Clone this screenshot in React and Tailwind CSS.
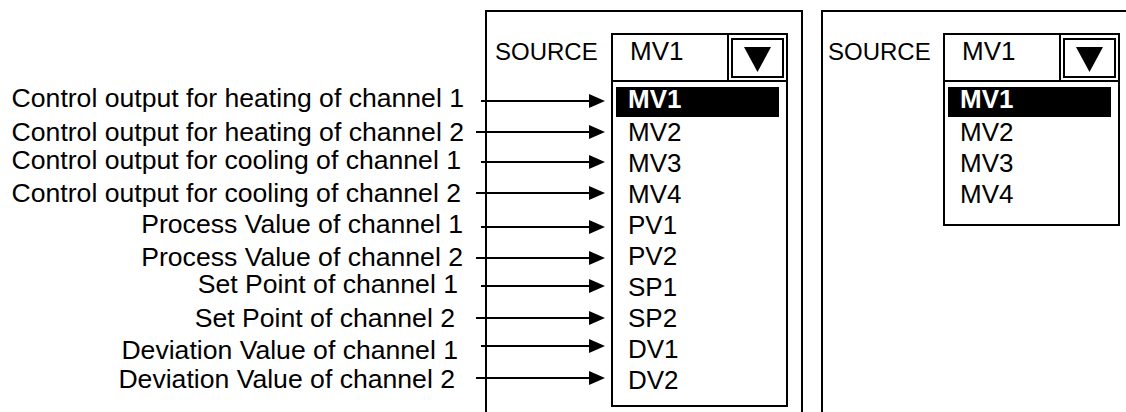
const labels = [
  { text: 'Control output for heating of channel 1', cls: 'mt-[75px] pr-[0px]' },
  { text: 'Control output for heating of channel 2', cls: 'mt-[7px] pr-[0px]' },
  { text: 'Control output for cooling of channel 1', cls: 'mt-[1px] pr-[3px]' },
  { text: 'Control output for cooling of channel 2', cls: 'mt-[6px] pr-[3px]' },
  { text: 'Process Value of channel 1', cls: 'mt-[4px] pr-[1px]' },
  { text: 'Process Value of channel 2', cls: 'mt-[6px] pr-[1px]' },
  { text: 'Set Point of channel 1', cls: 'mt-[0px] pr-[6px]' },
  { text: 'Set Point of channel 2', cls: 'mt-[7px] pr-[9px]' },
  { text: 'Deviation Value of channel 1', cls: 'mt-[5px] pr-[6px]' },
  { text: 'Deviation Value of channel 2', cls: 'mt-[2px] pr-[9px]' },
]

// arrow rows: top gap + where the shaft starts (odd rows start a bit later)
const arrows = [
  { cls: 'mt-[30px]', from: 5 },
  { cls: 'mt-[17px]', from: 0 },
  { cls: 'mt-[16px]', from: 5 },
  { cls: 'mt-[17px]', from: 0 },
  { cls: 'mt-[20px]', from: 5 },
  { cls: 'mt-[17px]', from: 0 },
  { cls: 'mt-[14px]', from: 5 },
  { cls: 'mt-[18px]', from: 0 },
  { cls: 'mt-[14px]', from: 5 },
  { cls: 'mt-[18px]', from: 0 },
]

const allItems = ['MV1', 'MV2', 'MV3', 'MV4', 'PV1', 'PV2', 'SP1', 'SP2', 'DV1', 'DV2']

function Arrow({ from }) {
  return (
    <svg width="129" height="14" viewBox="0 0 129 14" className="block shrink-0">
      <line x1={from} y1="7" x2="114" y2="7" stroke="black" strokeWidth="2" />
      <polygon points="113,0 129,7 113,14" fill="black" />
    </svg>
  )
}

function Dropdown({ items, listClass }) {
  return (
    <div className="mt-[21px] w-[177px] shrink-0 border-2 border-black">
      {/* Header */}
      <div className="flex h-[47px] border-b-2 border-black">
        <div className="flex-1 pl-[17px] pt-[4px] text-[26px] leading-[24px]">MV1</div>
        <div className="w-[59px] border-l-2 border-black px-[2px] pt-[3px]">
          <div className="flex h-[40px] justify-center border-2 border-black pt-[7px]">
            <svg width="27" height="25" viewBox="0 0 27 25" className="block">
              <polygon points="0,0 27,0 13.5,25" fill="black" />
            </svg>
          </div>
        </div>
      </div>

      {/* List */}
      <div className={`pl-[3px] pr-[7px] pt-[5px] ${listClass}`}>
        {items.map((it, i) =>
          i === 0 ? (
            <div key={it} className="mb-[3px] h-[30px] bg-black pl-[12px] text-[26px] font-bold leading-[24px] text-white">
              {it}
            </div>
          ) : (
            <div key={it} className="h-[31px] pl-[12px] text-[26px] leading-[24px]">
              {it}
            </div>
          )
        )}
      </div>
    </div>
  )
}

export default function App() {
  return (
    <div className="flex h-[412px] w-[1126px] items-start overflow-hidden bg-white pt-[10px] font-['Liberation_Sans',Arial,sans-serif] text-black">
      {/* Labels */}
      <div className="flex w-[464px] shrink-0 flex-col">
        {labels.map((l) => (
          <div key={l.text} className={`whitespace-nowrap text-right text-[26.6px] leading-[27px] ${l.cls}`}>
            {l.text}
          </div>
        ))}
      </div>

      {/* Panel 1 */}
      <div className="ml-[21px] flex h-[420px] w-[318px] shrink-0 items-start border-2 border-black">
        <div className="-ml-[11px] flex w-[135px] shrink-0 flex-col">
          <div className="mt-[28px] pl-[19px] text-[24px] leading-[24px]">SOURCE</div>
          {arrows.map((a, i) => (
            <div key={i} className={a.cls}>
              <Arrow from={a.from} />
            </div>
          ))}
        </div>
        <Dropdown items={allItems} listClass="pb-[6px]" />
      </div>

      {/* Panel 2 */}
      <div className="ml-[18px] flex h-[420px] w-[340px] shrink-0 items-start border-2 border-black">
        <div className="w-[120px] shrink-0">
          <div className="mt-[28px] pl-[5px] text-[24px] leading-[24px]">SOURCE</div>
        </div>
        <Dropdown items={allItems.slice(0, 4)} listClass="pb-[11px]" />
      </div>
    </div>
  )
}
